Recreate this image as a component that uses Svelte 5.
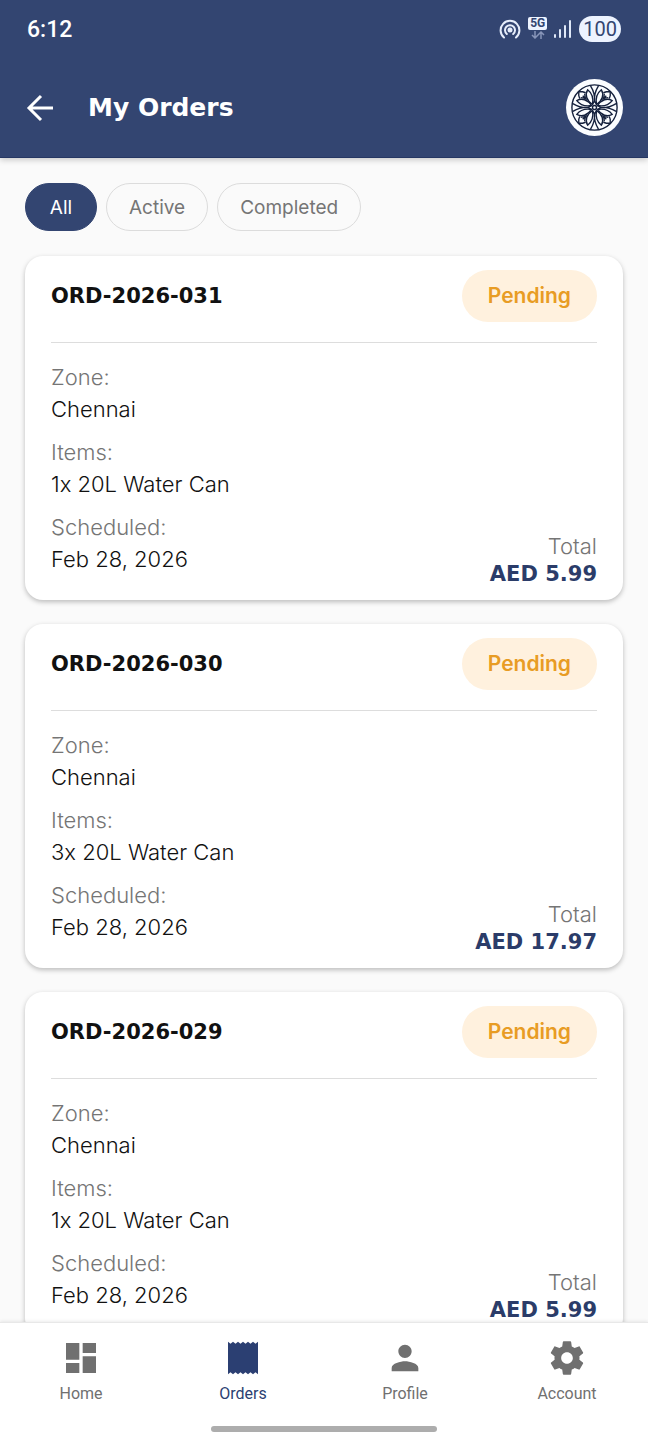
<script>
    let activeFilter = $state('All');

    const filters = ['All', 'Active', 'Completed'];

    const orders = [
        { id: 'ORD-2026-031', status: 'Pending', zone: 'Chennai', items: '1x 20L Water Can', date: 'Feb 28, 2026', total: 'AED 5.99' },
        { id: 'ORD-2026-030', status: 'Pending', zone: 'Chennai', items: '3x 20L Water Can', date: 'Feb 28, 2026', total: 'AED 17.97' },
        { id: 'ORD-2026-029', status: 'Pending', zone: 'Chennai', items: '1x 20L Water Can', date: 'Feb 28, 2026', total: 'AED 5.99' },
    ];

    const statusByFilter = { Active: 'Pending', Completed: 'Completed' };

    let visibleOrders = $derived(
        activeFilter === 'All' ? orders : orders.filter((o) => o.status === statusByFilter[activeFilter])
    );

    const tabs = [
        { label: 'Home', icon: 'M3 13h8V3H3v10zm0 8h8v-6H3v6zm10 0h8V11h-8v10zm0-18v6h8V3h-8z' },
        { label: 'Orders', icon: 'M3 2.200l1.500 1.300L6 2.200l1.500 1.300L9 2.200l1.500 1.300L12 2.200l1.500 1.300L15 2.200l1.500 1.300L18 2.200l1.500 1.300L21 2.200v19.600l-1.500-1.300-1.500 1.300-1.500-1.300-1.500 1.300-1.500-1.300-1.500 1.300-1.500-1.300L9 21.800l-1.500-1.300L6 21.800l-1.500-1.300L3 21.800z' },
        { label: 'Profile', icon: 'M12 12c2.21 0 4-1.79 4-4s-1.79-4-4-4-4 1.79-4 4 1.79 4 4 4zm0 2c-2.67 0-8 1.34-8 4v2h16v-2c0-2.66-5.33-4-8-4z' },
        { label: 'Account', icon: 'M19.43 12.98c.04-.32.07-.64.07-.98s-.03-.66-.07-.98l2.11-1.65c.19-.15.24-.42.12-.64l-2-3.46c-.12-.22-.39-.3-.61-.22l-2.49 1c-.52-.4-1.08-.73-1.69-.98l-.38-2.65C14.46 2.18 14.25 2 14 2h-4c-.25 0-.46.18-.49.42l-.38 2.65c-.61.25-1.17.59-1.69.98l-2.49-1c-.23-.09-.49 0-.61.22l-2 3.46c-.13.22-.07.49.12.64l2.11 1.65c-.04.32-.07.65-.07.98s.03.66.07.98l-2.11 1.65c-.19.15-.24.42-.12.64l2 3.46c.12.22.39.3.61.22l2.49-1c.52.4 1.08.73 1.69.98l.38 2.65c.03.24.24.42.49.42h4c.25 0 .46-.18.49-.42l.38-2.65c.61-.25 1.17-.59 1.69-.98l2.49 1c.23.09.49 0 .61-.22l2-3.46c.12-.22.07-.49-.12-.64l-2.11-1.65zM12 15.5c-1.93 0-3.5-1.57-3.5-3.5s1.57-3.5 3.5-3.5 3.5 1.57 3.5 3.5-1.57 3.5-3.5 3.5z' },
    ];
</script>

<div class="screen">
    <header>
        <div class="status-bar">
            <span class="time">6:12</span>
            <div class="status-icons">
                <svg class="hotspot" viewBox="0 0 22 22" fill="none" stroke="#e6edfb" stroke-width="2" stroke-linecap="round">
                    <circle cx="11" cy="12" r="2.5" fill="#e6edfb" stroke="none" />
                    <path d="M7.8 16a5 5 0 1 1 6.4 0M5 19.500a9.400 9.400 0 1 1 12 0" />
                </svg>
                <div class="network">
                    <span>5G</span>
                    <svg viewBox="0 0 16 8" fill="none" stroke="#8794b8" stroke-width="1.5">
                        <path d="M5 0v7M2 4l3 3 3-3M11 8V1M8 4l3-3 3 3" />
                    </svg>
                </div>
                <svg class="signal" viewBox="0 0 18 20" fill="#dfe8f8">
                    <rect x="0" y="15" width="2" height="4" rx="1" />
                    <rect x="5" y="10" width="2" height="9" rx="1" />
                    <rect x="10" y="6" width="2" height="13" rx="1" />
                    <rect x="15" y="1" width="2" height="18" rx="1" />
                </svg>
                <span class="battery">100</span>
            </div>
        </div>
        <div class="app-bar">
            <button class="back" aria-label="Back">
                <svg viewBox="0 0 28 28" fill="none" stroke="#fff" stroke-width="3">
                    <path d="M27 14H3M15 2L3 14l12 12" />
                </svg>
            </button>
            <h1>My Orders</h1>
            <svg class="logo" viewBox="-29 -29 58 58" fill="none" stroke="#14203c" stroke-width="1.4">
                <circle r="29" fill="#fbfdff" stroke="none" />
                <circle r="23" />
                {#each [0, 90, 180, 270] as angle}
                    <g transform="rotate({angle})">
                        <path d="M-4-22Q1-14 0-5Q-1-14 4-22M-2-3L0-7L2-3" />
                        <path d="M2-3C1-9 3-15 7-18C10-13 8-7 2-3Z" />
                        <path d="M3-2C7-8 13-10 18-7C15-3 9-1 3-2Z" />
                        <path d="M9-15L12-16L16-16L16-12L15-9M8-8L12-12M10-14Q10-10 8-8Q10-10 14-10" />
                    </g>
                {/each}
                <circle r="2" />
            </svg>
        </div>
    </header>

    <main>
        <div class="filters">
            {#each filters as filter}
                <button class:selected={activeFilter === filter} onclick={() => (activeFilter = filter)}>{filter}</button>
            {/each}
        </div>

        {#each visibleOrders as order}
            <article class="card">
                <div class="card-head">
                    <h2>{order.id}</h2>
                    <span class="status">{order.status}</span>
                </div>
                <div class="card-body">
                    <dl>
                        <div>
                            <dt>Zone:</dt>
                            <dd>{order.zone}</dd>
                        </div>
                        <div>
                            <dt>Items:</dt>
                            <dd>{order.items}</dd>
                        </div>
                        <div>
                            <dt>Scheduled:</dt>
                            <dd>{order.date}</dd>
                        </div>
                    </dl>
                    <div class="total">
                        <span>Total</span>
                        <strong>{order.total}</strong>
                    </div>
                </div>
            </article>
        {/each}
    </main>

    <footer>
        <nav>
            {#each tabs as tab}
                <a href="#{tab.label.toLowerCase()}" class:current={tab.label === 'Orders'}>
                    <svg viewBox="0 0 24 24" fill="currentColor"><path d={tab.icon} /></svg>
                    <span>{tab.label}</span>
                </a>
            {/each}
        </nav>
        <div class="handle"></div>
    </footer>
</div>

<style>
    :global(body) {
        margin: 0;
        background: #fafafa;
    }

    .screen {
        display: flex;
        flex-direction: column;
        height: 100vh;
        overflow: hidden;
        font-family: Inter, "Liberation Sans", sans-serif;
        color: #111;
    }

    h1, h2, dl, dd {
        margin: 0;
    }

    button {
        font-family: inherit;
        cursor: pointer;
    }

    header {
        flex: none;
        position: relative;
        background: #334571;
        color: #fff;
        border-bottom: 1px solid #263763;
        box-shadow: 0 2px 6px rgba(0, 0, 0, 0.2);
    }

    .status-bar {
        display: flex;
        justify-content: space-between;
        align-items: center;
        height: 58px;
        padding: 0 27px;
        font-family: Roboto, sans-serif;
    }

    .time {
        font-size: 23px;
        font-weight: 500;
    }

    .status-icons {
        display: flex;
        align-items: center;
        gap: 7px;
    }

    .hotspot {
        width: 22px;
        height: 22px;
    }

    .network {
        display: flex;
        flex-direction: column;
        align-items: center;
        gap: 1px;
        height: 24px;
    }

    .network span {
        padding: 0 2px;
        border-radius: 2px;
        background: #edf3ff;
        color: #334571;
        font-size: 12px;
        font-weight: 700;
        line-height: 13px;
    }

    .network svg {
        width: 16px;
        height: 8px;
    }

    .signal {
        width: 18px;
        height: 20px;
    }

    .battery {
        padding: 0 4px;
        border-radius: 13px;
        background: #edf3ff;
        color: #334571;
        font-size: 20px;
        font-weight: 400;
        line-height: 26px;
    }

    .app-bar {
        display: flex;
        align-items: center;
        height: 99px;
        padding: 0 25px 0 26px;
    }

    .back {
        display: flex;
        padding: 0;
        border: 0;
        background: none;
    }

    .back svg {
        width: 28px;
        height: 28px;
    }

    h1 {
        flex: 1;
        margin-left: 34px;
        font-family: "DejaVu Sans", sans-serif;
        font-size: 25px;
        font-weight: 700;
        line-height: 32px;
    }

    .logo {
        width: 57px;
        height: 57px;
    }

    main {
        flex: 1;
        min-height: 0;
        overflow: hidden;
        padding: 25px 25px 0;
    }

    .filters {
        display: flex;
        gap: 9px;
        margin-bottom: 25px;
    }

    .filters button {
        height: 48px;
        padding: 0 22px;
        border: 1px solid #dcdcdc;
        border-radius: 24px;
        background: #fafafa;
        color: #757575;
        font-size: 19px;
    }

    .filters .selected {
        min-width: 72px;
        border-color: #334571;
        background: #334571;
        color: #fff;
    }

    .card {
        margin-bottom: 24px;
        padding: 14px 26px 12px;
        border-radius: 18px;
        background: #fff;
        box-shadow: 0 2px 5px rgba(0, 0, 0, 0.25);
    }

    .card-head {
        display: flex;
        justify-content: space-between;
        align-items: center;
        padding-bottom: 20px;
        border-bottom: 1px solid #ddd;
    }

    h2 {
        font-family: "DejaVu Sans", sans-serif;
        font-size: 21px;
        font-weight: 700;
    }

    .status {
        padding: 0 26px;
        border-radius: 26px;
        background: #fff1de;
        color: #e89c24;
        font-size: 21px;
        font-weight: 600;
        line-height: 52px;
    }

    .card-body {
        display: flex;
        justify-content: space-between;
        align-items: flex-end;
        padding-top: 18px;
    }

    dl {
        display: grid;
        gap: 11px;
        padding-bottom: 13px;
        font-size: 22px;
        font-weight: 300;
        line-height: 32px;
        /* keeps Inter from turning "1x 20" into a multiplication sign */
        font-feature-settings: "calt" 0;
    }

    dt {
        color: #757575;
    }

    .total {
        display: flex;
        flex-direction: column;
        align-items: flex-end;
        line-height: 28px;
    }

    .total span {
        color: #757575;
        font-size: 22px;
        font-weight: 300;
    }

    .total strong {
        color: #2b3c69;
        font-family: "DejaVu Sans", sans-serif;
        font-size: 21px;
    }

    footer {
        flex: none;
        position: relative;
        padding-bottom: 8px;
        border-top: 1px solid #e8e8e8;
        background: #fff;
        box-shadow: 0 -1px 3px rgba(0, 0, 0, 0.08);
    }

    nav {
        display: grid;
        grid-template-columns: repeat(4, 1fr);
        padding: 15px 0 22px;
    }

    nav a {
        display: flex;
        flex-direction: column;
        align-items: center;
        gap: 6px;
        color: #707070;
        font-family: Roboto, sans-serif;
        font-size: 16px;
        line-height: 20px;
        text-decoration: none;
    }

    nav svg {
        width: 40px;
        height: 40px;
    }

    nav .current {
        color: #2b3f72;
    }

    .handle {
        width: 35%;
        height: 6px;
        margin: 0 auto;
        border-radius: 3px;
        background: #adadad;
    }
</style>
